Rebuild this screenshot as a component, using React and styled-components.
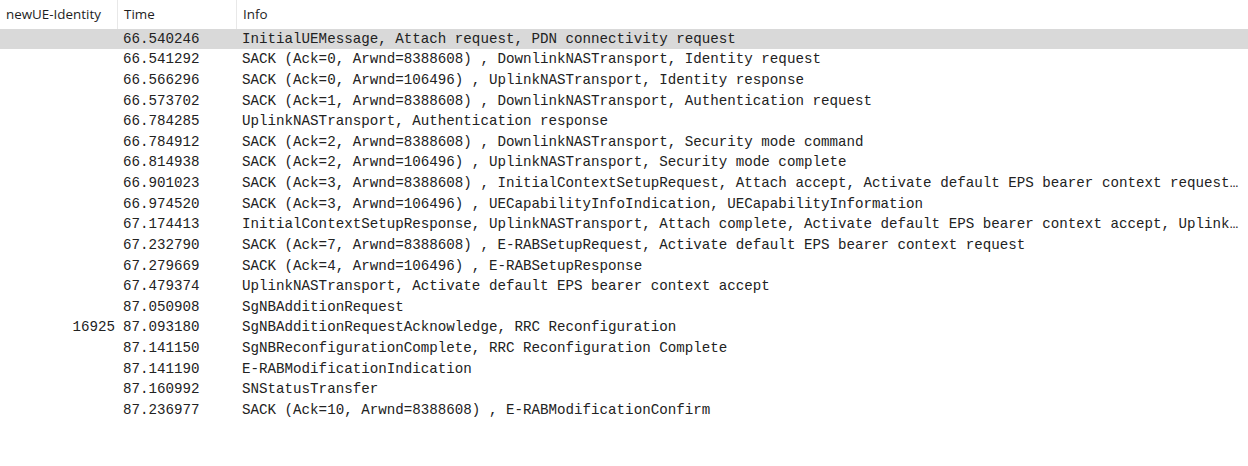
import React from "react";
import styled, { createGlobalStyle } from "styled-components";

const Global = createGlobalStyle`
  body {
    margin: 0;
    background: #fff;
  }
`;

const Wrapper = styled.div`
  width: 1248px;
  height: 466px;
  overflow: hidden;
  background: #fff;
  user-select: none;
`;

const Header = styled.div`
  display: grid;
  grid-template-columns: 118px 119px 1009px;
  height: 28.5px;
  font-family: "Open Sans", "Noto Sans", sans-serif;
  font-size: 13.4px;
  color: #1e1e1e;
  .col {
    display: flex;
    align-items: center;
    padding-left: 6px;
    padding-bottom: 1px;
    border-right: 1px solid #e8e8e8;
    &:last-of-type {
      border-right: 0;
    }
  }
`;

const Row = styled.div`
  display: grid;
  grid-template-columns: 118px 119px 1007px;
  height: 20.62px;
  align-items: center;
  background: ${(p) => (p.selected ? "#d9d9d9" : "transparent")};
  font-family: "Liberation Mono", "DejaVu Sans Mono", monospace;
  font-size: 14.2px;
  color: #222;
  white-space: nowrap;
  .id {
    text-align: right;
    padding-right: 3px;
  }
  .time {
    padding-left: 5px;
  }
  .info {
    padding-left: 5px;
    overflow: hidden;
    text-overflow: ellipsis;
  }
`;

const rows = [
  ["", "66.540246", "InitialUEMessage, Attach request, PDN connectivity request"],
  ["", "66.541292", "SACK (Ack=0, Arwnd=8388608) , DownlinkNASTransport, Identity request"],
  ["", "66.566296", "SACK (Ack=0, Arwnd=106496) , UplinkNASTransport, Identity response"],
  ["", "66.573702", "SACK (Ack=1, Arwnd=8388608) , DownlinkNASTransport, Authentication request"],
  ["", "66.784285", "UplinkNASTransport, Authentication response"],
  ["", "66.784912", "SACK (Ack=2, Arwnd=8388608) , DownlinkNASTransport, Security mode command"],
  ["", "66.814938", "SACK (Ack=2, Arwnd=106496) , UplinkNASTransport, Security mode complete"],
  ["", "66.901023", "SACK (Ack=3, Arwnd=8388608) , InitialContextSetupRequest, Attach accept, Activate default EPS bearer context request , UECapabilityEnquiry"],
  ["", "66.974520", "SACK (Ack=3, Arwnd=106496) , UECapabilityInfoIndication, UECapabilityInformation"],
  ["", "67.174413", "InitialContextSetupResponse, UplinkNASTransport, Attach complete, Activate default EPS bearer context accept, UplinkNASTransport"],
  ["", "67.232790", "SACK (Ack=7, Arwnd=8388608) , E-RABSetupRequest, Activate default EPS bearer context request"],
  ["", "67.279669", "SACK (Ack=4, Arwnd=106496) , E-RABSetupResponse"],
  ["", "67.479374", "UplinkNASTransport, Activate default EPS bearer context accept"],
  ["", "87.050908", "SgNBAdditionRequest"],
  ["16925", "87.093180", "SgNBAdditionRequestAcknowledge, RRC Reconfiguration"],
  ["", "87.141150", "SgNBReconfigurationComplete, RRC Reconfiguration Complete"],
  ["", "87.141190", "E-RABModificationIndication"],
  ["", "87.160992", "SNStatusTransfer"],
  ["", "87.236977", "SACK (Ack=10, Arwnd=8388608) , E-RABModificationConfirm"],
];

export default function App() {
  return (
    <Wrapper>
      <Global />
      <Header>
        <div className="col">newUE-Identity</div>
        <div className="col">Time</div>
        <div className="col">Info</div>
      </Header>
      {rows.map((r, i) => (
        <Row key={r[1] + i} selected={i === 0}>
          <div className="id">{r[0]}</div>
          <div className="time">{r[1]}</div>
          <div className="info">{r[2]}</div>
        </Row>
      ))}
    </Wrapper>
  );
}
